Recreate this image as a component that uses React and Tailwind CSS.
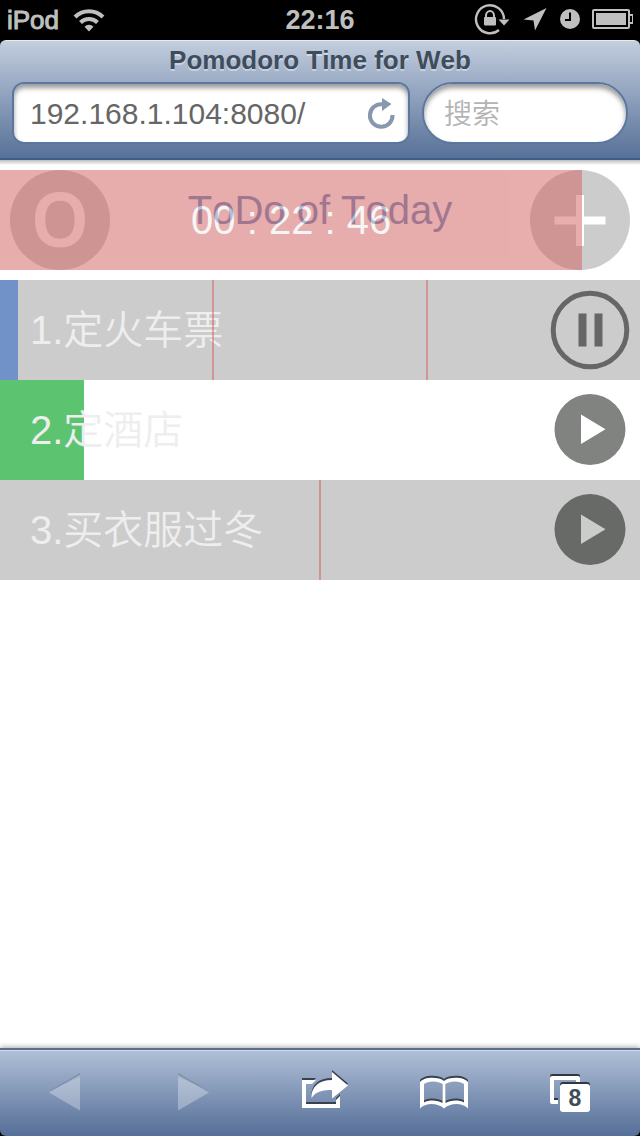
import React from "react";

const tasks = [
  {
    name: "1.定火车票",
    shaded: true,
    progress: { width: "w-[18px]", color: "bg-[#7092c8]" },
    parts: 3,
    running: true,
  },
  {
    name: "2.定酒店",
    shaded: false,
    progress: { width: "w-[84px]", color: "bg-[#5cc371]" },
    parts: 1,
    running: false,
  },
  { name: "3.买衣服过冬", shaded: true, progress: null, parts: 2, running: false },
];

function StatusBar() {
  return (
    <div className="grid h-10 grid-cols-3 items-center bg-black px-[7px] text-[26px] leading-10 font-bold text-[#bfbfbf]">
      <div className="flex items-center gap-[14px]">
        <span className="font-normal [-webkit-text-stroke:1px_#bfbfbf]">iPod</span>
        <svg className="h-6 w-8" viewBox="0 0 32 24" fill="none" stroke="#bfbfbf" aria-label="Wi-Fi">
          <path d="M2 9a20 20 0 0 1 28 0" strokeWidth="4" />
          <path d="M7.500 14.500a12 12 0 0 1 17 0" strokeWidth="4" />
          <path d="M16 23.500l-4.500-4.800a6.400 6.400 0 0 1 9 0z" fill="#bfbfbf" stroke="none" />
        </svg>
      </div>
      <span className="text-center text-[27px]">22:16</span>
      <div className="flex items-center justify-end">
        <svg className="h-8 w-40 shrink-0" viewBox="0 0 160 32" fill="#bfbfbf" aria-label="Status">
          <path d="M31 15A14 14 0 1 0 26 26" fill="none" stroke="#bfbfbf" strokeWidth="2.4" />
          <path d="M25.500 15.500h11l-5.500 6z" />
          <rect x="11" y="13" width="12" height="8.500" rx="1" />
          <path d="M13 14v-2.500a4 4.500 0 0 1 8 0v2.500" fill="none" stroke="#bfbfbf" strokeWidth="2" />
          <path d="M73.500 4L62 26.500 60.500 16.500 50.500 15.500z" />
          <circle cx="97" cy="15" r="10" />
          <path d="M97 8.500V16h-5" fill="none" stroke="#000" strokeWidth="2" />
          <rect x="120" y="6" width="36" height="18" rx="1" fill="none" stroke="#bfbfbf" strokeWidth="2" />
          <rect x="123" y="9" width="30" height="12" />
          <path d="M157 11h3v8h-3" fill="none" stroke="#bfbfbf" strokeWidth="2" />
        </svg>
      </div>
    </div>
  );
}

function BrowserBar() {
  const field =
    "flex h-[62px] items-center border-2 border-[#5c779f] bg-white shadow-[inset_0_4px_5px_rgba(0,0,0,0.4)]";
  return (
    <div className="bg-black">
      <div className="rounded-t-md border-t border-b-2 border-t-[#e6ebf2] border-b-[#405d88] bg-linear-to-b from-[#c3cede] to-[#587198] px-3 pb-[14px]">
        <h1 className="pb-[2px] text-center text-[26px] leading-[39px] font-bold text-[#3f4c5b] [font-kerning:none] [text-shadow:0_2px_0_rgba(255,255,255,0.4)]">
          Pomodoro Time for Web
        </h1>
        <div className="flex gap-3">
          <div className={`${field} min-w-0 flex-1 rounded-xl pr-[11px] pl-4`}>
            <input
              aria-label="Address"
              defaultValue="192.168.1.104:8080/"
              className="min-w-0 flex-1 bg-transparent text-[30px] text-[#666] outline-none"
            />
            <button aria-label="Reload">
              <svg className="size-8" viewBox="0 0 32 32">
                <path d="M27.500 18A11.300 11.300 0 1 1 17 7.200" fill="none" stroke="#8797ae" strokeWidth="4" />
                <path d="M17 1v13l9.500-7z" fill="#8797ae" />
              </svg>
            </button>
          </div>
          <div className={`${field} w-[206px] rounded-full px-5 pt-1`}>
            <input
              aria-label="搜索"
              placeholder="搜索"
              className="w-full min-w-0 bg-transparent text-[28px] font-[350] outline-none placeholder:text-[#b3b3b3]"
            />
          </div>
        </div>
      </div>
    </div>
  );
}

function TodoHeader() {
  return (
    <header className="relative flex h-[100px] items-center justify-between px-[10px]">
      <button className="size-[100px] rounded-full bg-[#ccc] pb-1 font-['Noto_Sans'] text-[72px] leading-[96px] font-medium text-white [-webkit-text-stroke:2px_#fff]">
        O
      </button>
      <h2 className="pb-5 text-[40px] leading-[60px] text-[#7092c8] [font-kerning:none]">ToDo of Today</h2>
      <button aria-label="Add" className="size-[100px] rounded-full bg-[#ccc]">
        <svg className="size-full" viewBox="0 0 100 100" fill="#fff">
          <path d="M46 25h8v21.500h21.500v8H54V76h-8V54.500H24.500v-8H46z" />
        </svg>
      </button>
      <div className="pointer-events-none absolute inset-y-0 left-0 w-[91%] bg-[#d15b5b] text-center text-[40px] leading-[100px] text-[#eee] opacity-50">
        00 : 22 : 46
      </div>
    </header>
  );
}

function PauseIcon() {
  return (
    <svg className="size-20" viewBox="0 0 80 80" fill="#666">
      <circle cx="40" cy="40" r="36.800" fill="none" stroke="#666" strokeWidth="5" />
      <path d="M28.500 23.500h8v33h-8zM44.500 23.500h8v33h-8z" />
    </svg>
  );
}

function PlayIcon() {
  return (
    <svg className="size-20" viewBox="0 0 80 80">
      <path
        d="M40 4a35.500 35.500 0 1 0 0 71a35.500 35.500 0 0 0 0-71zM31 24.500l24.500 14.700L31 54z"
        fill="#040804"
        fillOpacity="0.5"
        fillRule="evenodd"
      />
    </svg>
  );
}

function TaskRow({ task }) {
  return (
    <li className={`relative flex h-[100px] items-center justify-between pr-[10px] pl-[30px] ${task.shaded ? "bg-[#ccc]" : "bg-white"}`}>
      {task.progress && (
        <div className={`absolute inset-y-0 left-0 ${task.progress.width} ${task.progress.color}`} />
      )}
      <span className="relative text-[40px] leading-[100px] font-[350] text-[#eee]">{task.name}</span>
      <div className="pointer-events-none absolute inset-0 flex">
        {Array.from({ length: task.parts }, (_, i) => (
          <div key={i} className={`flex-1 ${i < task.parts - 1 ? "border-r-2 border-[#d15b5b]/50" : ""}`} />
        ))}
      </div>
      <button aria-label={task.running ? "Pause" : "Play"} className="relative">
        {task.running ? <PauseIcon /> : <PlayIcon />}
      </button>
    </li>
  );
}

function ToolButton({ label, children }) {
  return (
    <button aria-label={label} className="flex items-center justify-center">
      <svg className="h-12 w-16" viewBox="0 0 64 48">
        {children}
      </svg>
    </button>
  );
}

function BookShape({ color }) {
  return (
    <path
      fill={color}
      fillRule="evenodd"
      d="M4 39.500V13C8 7.500 23 7.500 28 12C33 7.500 48 7.500 52 13V39.500C47 33.500 34 33.500 28 39.500C22 33.500 9 33.500 4 39.500zM8 15V33.500C13 30.500 22 31 26.500 34V15C22 11.500 12 11.500 8 15zM29.500 15V34C34 31 43 30.500 48 33.500V15C44 11.500 34 11.500 29.500 15z"
    />
  );
}

function ShareShape({ color }) {
  return (
    <g fill={color}>
      <path d="M14 11h14l-4 4h-6v20h30v-4l4-4v12H14z" />
      <path d="M44 3l16 13.500L44 29.500v-8.500c-9 0-16 1-20.500 8c-0.500-11 7-18 20.500-18z" />
    </g>
  );
}

function Toolbar() {
  return (
    <div className="bg-black shadow-[0_-1px_5px_rgba(0,0,0,0.35)]">
      <nav className="grid h-[88px] grid-cols-5 rounded-b-md border-t-2 border-[#586f90] bg-linear-to-b from-[#b1c0d7] to-[#566f98] shadow-[inset_0_1px_0_#d3dce8]">
        <ToolButton label="Back">
          <path d="M17 22L48 4v4z" fill="#7c8da8" />
          <path d="M17 23.500L48 5.500v36z" fill="#fff" fillOpacity="0.3" />
        </ToolButton>
        <ToolButton label="Forward">
          <path d="M18 4v4l31 14z" fill="#7c8da8" />
          <path d="M18 5.500v36l31-18z" fill="#fff" fillOpacity="0.3" />
        </ToolButton>
        <ToolButton label="Share">
          <g transform="translate(0 -2)">
            <ShareShape color="#37424f" />
          </g>
          <ShareShape color="#fff" />
        </ToolButton>
        <ToolButton label="Bookmarks">
          <g transform="translate(0 -2)">
            <BookShape color="#37424f" />
          </g>
          <BookShape color="#fff" />
        </ToolButton>
        <ToolButton label="Pages">
          <g fill="none" strokeWidth="4" strokeLinejoin="round">
            <path d="M34 12V7H8v24h6" stroke="#2f3743" />
            <path d="M34 13V9H8v24h6" stroke="#fff" />
          </g>
          <rect x="16" y="13" width="30" height="28" rx="3" fill="#2f3743" />
          <rect x="16" y="15" width="30" height="28" rx="3" fill="#fff" />
          <text x="31" y="37" textAnchor="middle" fontSize="23" fontWeight="700" fill="#3f4c5b">
            8
          </text>
        </ToolButton>
      </nav>
    </div>
  );
}

export default function App() {
  return (
    <div className="flex min-h-screen flex-col bg-white font-['Liberation_Sans','Noto_Sans_CJK_SC',sans-serif]">
      <StatusBar />
      <BrowserBar />
      <main className="flex-1">
        <div className="mb-[5px] h-[5px] bg-linear-to-b from-[#bdbdbd] to-white" />
        <TodoHeader />
        <ul className="mt-[10px]">
          {tasks.map((task) => (
            <TaskRow key={task.name} task={task} />
          ))}
        </ul>
      </main>
      <Toolbar />
    </div>
  );
}
